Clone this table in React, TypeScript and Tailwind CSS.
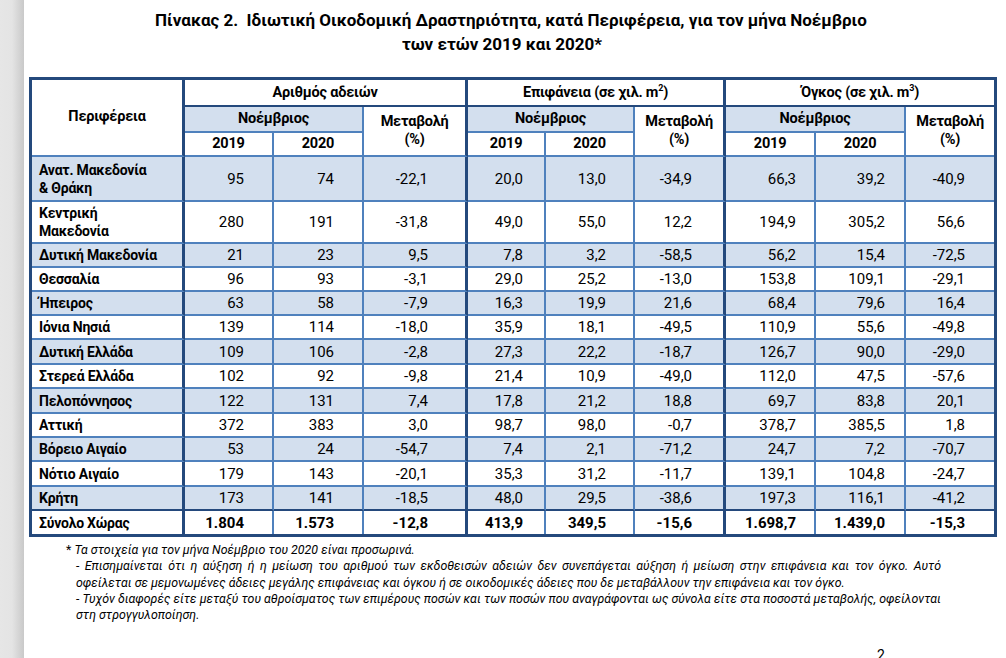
import React from "react";

type Row = { name: React.ReactNode; v: string[]; h: string; bg: boolean; last?: boolean; total?: boolean };

const rows: Row[] = [
  { name: (<>Ανατ. Μακεδονία<br />&amp; Θράκη</>), v: ["95", "74", "-22,1", "20,0", "13,0", "-34,9", "66,3", "39,2", "-40,9"], h: "h-[45px]", bg: true },
  { name: (<>Κεντρική<br />Μακεδονία</>), v: ["280", "191", "-31,8", "49,0", "55,0", "12,2", "194,9", "305,2", "56,6"], h: "h-[42px]", bg: false },
  { name: "Δυτική Μακεδονία", v: ["21", "23", "9,5", "7,8", "3,2", "-58,5", "56,2", "15,4", "-72,5"], h: "h-[24px]", bg: true },
  { name: "Θεσσαλία", v: ["96", "93", "-3,1", "29,0", "25,2", "-13,0", "153,8", "109,1", "-29,1"], h: "h-[24px]", bg: false },
  { name: "Ήπειρος", v: ["63", "58", "-7,9", "16,3", "19,9", "21,6", "68,4", "79,6", "16,4"], h: "h-[24px]", bg: true },
  { name: "Ιόνια Νησιά", v: ["139", "114", "-18,0", "35,9", "18,1", "-49,5", "110,9", "55,6", "-49,8"], h: "h-[24px]", bg: false },
  { name: "Δυτική Ελλάδα", v: ["109", "106", "-2,8", "27,3", "22,2", "-18,7", "126,7", "90,0", "-29,0"], h: "h-[25px]", bg: true },
  { name: "Στερεά Ελλάδα", v: ["102", "92", "-9,8", "21,4", "10,9", "-49,0", "112,0", "47,5", "-57,6"], h: "h-[24px]", bg: false },
  { name: "Πελοπόννησος", v: ["122", "131", "7,4", "17,8", "21,2", "18,8", "69,7", "83,8", "20,1"], h: "h-[25px]", bg: true },
  { name: "Αττική", v: ["372", "383", "3,0", "98,7", "98,0", "-0,7", "378,7", "385,5", "1,8"], h: "h-[24px]", bg: false },
  { name: "Βόρειο Αιγαίο", v: ["53", "24", "-54,7", "7,4", "2,1", "-71,2", "24,7", "7,2", "-70,7"], h: "h-[24px]", bg: true },
  { name: "Νότιο Αιγαίο", v: ["179", "143", "-20,1", "35,3", "31,2", "-11,7", "139,1", "104,8", "-24,7"], h: "h-[25px]", bg: false },
  { name: "Κρήτη", v: ["173", "141", "-18,5", "48,0", "29,5", "-38,6", "197,3", "116,1", "-41,2"], h: "h-[24px]", bg: true, last: true },
  { name: "Σύνολο Χώρας", v: ["1.804", "1.573", "-12,8", "413,9", "349,5", "-15,6", "1.698,7", "1.439,0", "-15,3"], h: "h-[23px]", bg: false, total: true },
];

const padR = ["pr-[28px]", "pr-[28px]", "pr-[37px]", "pr-[21px]", "pr-[27px]", "pr-[31px]", "pr-[18px]", "pr-[19px]", "pr-[29px]"];
const rightB = [
  "border-r-2 border-r-[#4f81bd]",
  "border-r-2 border-r-[#4f81bd]",
  "border-r-[3px] border-r-[#24497c]",
  "border-r-2 border-r-[#4f81bd]",
  "border-r-2 border-r-[#4f81bd]",
  "border-r-[3px] border-r-[#24497c]",
  "border-r-2 border-r-[#4f81bd]",
  "border-r-2 border-r-[#4f81bd]",
  "",
];

function bottomB(r: Row) {
  if (r.total) return "";
  if (r.last) return "border-b-2 border-b-[#24497c]";
  return "border-b-2 border-b-[#4f81bd]";
}

const groups = [
  { title: <>Αριθμός αδειών</>, last: false },
  { title: <>Επιφάνεια (σε χιλ. m<sup className="text-[9px] relative -top-[6px]">2</sup>)</>, last: false },
  { title: <>Όγκος (σε χιλ. m<sup className="text-[9px] relative -top-[6px]">3</sup>)</>, last: true },
];

export default function App() {
  return (
    <div className="w-[1006px] h-[658px] overflow-hidden flex bg-white font-['Roboto',sans-serif] text-black">
      <div className="w-[24px] shrink-0 bg-gradient-to-r from-[#e6e6e6] via-[#e4e4e4] to-[#c9c9c9]" />
      <div className="flex-1 flex flex-col pl-[5px]">
        <div className="w-[964px] pt-[8px] flex flex-col items-center text-[17px] font-bold leading-[24px]">
          <div className="whitespace-pre">Πίνακας 2.  Ιδιωτική Οικοδομική Δραστηριότητα, κατά Περιφέρεια, για τον μήνα Νοέμβριο</div>
          <div className="pr-[18px]">των ετών 2019 και 2020*</div>
        </div>
        <table className="mt-[21px] w-[968px] table-fixed border-separate border-spacing-0 border-[3px] border-[#24497c] text-[15px] leading-[18px]">
          <colgroup>
            <col className="w-[153px]" />
            <col className="w-[89px]" />
            <col className="w-[90px]" />
            <col className="w-[104px]" />
            <col className="w-[78px]" />
            <col className="w-[89px]" />
            <col className="w-[91px]" />
            <col className="w-[90px]" />
            <col className="w-[90px]" />
            <col className="w-[88px]" />
          </colgroup>
          <thead className="text-[14.5px] tracking-[-0.2px]">
            <tr className="h-[27px]">
              <th rowSpan={3} className="font-bold text-center align-middle border-r-[3px] border-r-[#24497c] border-b-2 border-b-[#4f81bd] pb-[2px]">
                Περιφέρεια
              </th>
              {groups.map((g, i) => (
                <th
                  key={i}
                  colSpan={3}
                  className={
                    "font-bold text-center align-middle border-b-2 border-b-[#24497c] " +
                    (g.last ? "" : "border-r-[3px] border-r-[#24497c]")
                  }
                >
                  {g.title}
                </th>
              ))}
            </tr>
            <tr className="h-[26px]">
              {groups.map((g, i) => (
                <React.Fragment key={i}>
                  <th colSpan={2} className="font-bold text-center align-middle bg-[#d3dfee] border-r-2 border-r-[#4f81bd] border-b-2 border-b-[#4f81bd]">
                    Νοέμβριος
                  </th>
                  <th
                    rowSpan={2}
                    className={
                      "font-bold text-center align-middle border-b-2 border-b-[#4f81bd] " +
                      (g.last ? "" : "border-r-[3px] border-r-[#24497c]")
                    }
                  >
                    Μεταβολή
                    <br />
                    (%)
                  </th>
                </React.Fragment>
              ))}
            </tr>
            <tr className="h-[24px]">
              {groups.map((_, i) => (
                <React.Fragment key={i}>
                  <th className="font-bold text-center align-middle border-r-2 border-r-[#4f81bd] border-b-2 border-b-[#4f81bd]">2019</th>
                  <th className="font-bold text-center align-middle border-r-2 border-r-[#4f81bd] border-b-2 border-b-[#4f81bd]">2020</th>
                </React.Fragment>
              ))}
            </tr>
          </thead>
          <tbody>
            {rows.map((r, ri) => (
              <tr key={ri} className={r.h + " " + (r.bg ? "bg-[#d3dfee]" : "bg-white")}>
                <td className={"font-bold text-left align-middle pl-[7px] text-[14px] tracking-[-0.2px] " + (r.total ? "text-[14.5px] " : "") + "border-r-[3px] border-r-[#24497c] " + bottomB(r)}>{r.name}</td>
                {r.v.map((val, ci) => (
                  <td
                    key={ci}
                    className={
                      "text-right align-middle " +
                      padR[ci] +
                      " " +
                      rightB[ci] +
                      " " +
                      bottomB(r) +
                      (r.total ? " font-bold" : "")
                    }
                  >
                    {val}
                  </td>
                ))}
              </tr>
            ))}
          </tbody>
        </table>
        <div className="mt-[5px] pl-[47px] w-[912px] italic text-[12.4px] leading-[16.3px]">
          <p className="-indent-[10px]">
            <span className="not-italic">*</span> Τα στοιχεία για τον μήνα Νοέμβριο του 2020 είναι προσωρινά.
          </p>
          <p className="text-justify">
            - Επισημαίνεται ότι η αύξηση ή η μείωση του αριθμού των εκδοθεισών αδειών δεν συνεπάγεται αύξηση ή μείωση στην επιφάνεια και τον όγκο. Αυτό οφείλεται σε μεμονωμένες άδειες μεγάλης επιφάνειας και όγκου ή σε οικοδομικές άδειες που δε μεταβάλλουν την επιφάνεια και τον όγκο.
          </p>
          <p className="text-justify">
            - Τυχόν διαφορές είτε μεταξύ του αθροίσματος των επιμέρους ποσών και των ποσών που αναγράφονται ως σύνολα είτε στα ποσοστά μεταβολής, οφείλονται στη στρογγυλοποίηση.
          </p>
        </div>
        <div className="mt-[24px] pl-[848px] text-[14px] leading-[16px]">2</div>
      </div>
    </div>
  );
}
